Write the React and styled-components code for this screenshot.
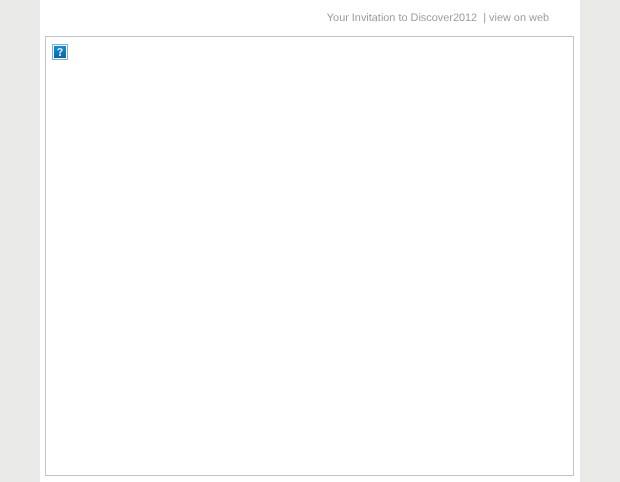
import React from 'react';
import styled, { createGlobalStyle } from 'styled-components';

const Global = createGlobalStyle`
  html, body { margin: 0; padding: 0; background: #eaeae8; height: 482px; overflow: hidden; }
`;

const Page = styled.div`
  width: 540px;
  height: 482px;
  margin: 0 auto;
  background: #fff;
  font-family: "Liberation Sans", Arial, sans-serif;
  overflow: hidden;
`;

const Header = styled.div`
  height: 36px;
  box-sizing: border-box;
  padding: 12px 31px 0 0;
  text-align: right;
  font-size: 10.9px;
  line-height: 12px;
  color: #9c9c9c;
  white-space: pre;
  will-change: transform;
  text-rendering: geometricPrecision;
`;

const Frame = styled.div`
  box-sizing: border-box;
  width: 529px;
  height: 440px;
  margin-left: 5px;
  padding: 7px 6px;
  border: 1px solid #c4c4c4;
`;

const Broken = styled.svg`
  display: block;
  width: 16px;
  height: 16px;
`;

const BrokenImage = () => (
  <Broken viewBox="0 0 16 16" aria-label="missing image">
    <defs>
      <linearGradient id="q" x1="0" y1="0" x2="0" y2="1">
        <stop offset="0" stopColor="#1a8ccb" />
        <stop offset="1" stopColor="#0568b0" />
      </linearGradient>
    </defs>
    <rect x="0.5" y="0.5" width="15" height="15" fill="#fff" stroke="#7fb2d9" />
    <rect x="2" y="2" width="12" height="12" fill="url(#q)" />
    <path d="M5.2 6.2 C5.3 4.6 6.6 4 8 4 C9.6 4 10.8 4.8 10.8 6 C10.8 7.5 8.8 7.6 8.8 9.4 H7.2 C7.2 7.3 9 7.2 9 6.1 C9 5.5 8.6 5.2 8 5.2 C7.4 5.2 7 5.6 7 6.2 Z" fill="#d8ebf6" />
    <rect x="7.2" y="10.2" width="1.6" height="1.8" fill="#fff" />
  </Broken>
);

export default function App() {
  return (
    <>
      <Global />
      <Page>
        <Header>Your Invitation to Discover2012  | view on web</Header>
        <Frame>
          <BrokenImage />
        </Frame>
      </Page>
    </>
  );
}
